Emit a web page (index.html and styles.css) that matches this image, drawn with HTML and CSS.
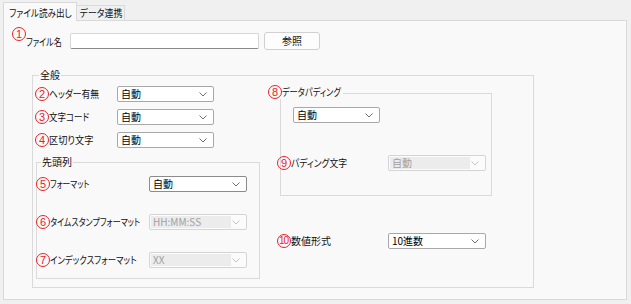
FILE: index.html
```html
<!DOCTYPE html>
<html lang="ja">
<head>
    <meta charset="UTF-8">
    <title>ファイル読み出し</title>
    <link rel="stylesheet" href="styles.css">
</head>
<body>

    <!-- タブ -->
    <div class="tabs">
        <div class="tab active"><span class="t sx-86">ファイル読み出し</span></div>
        <div class="tab"><span class="t sx-89">データ連携</span></div>
    </div>

    <div class="panel">

        <div class="file-row">
            <span class="num">1</span>
            <span class="file-label"><span class="t sx-80">ファイル名</span></span>
            <input class="file-input" type="text">
            <button class="browse">参照</button>
        </div>

        <div class="group general">
            <div class="group-title">全般</div>
            <div class="general-body">

                <div class="col-left">
                    <div class="rows">
                        <div class="row">
                            <span class="num">2</span>
                            <span class="label w-68"><span class="t sx-88">ヘッダー有無</span></span>
                            <div class="select w-97"><span class="value">自動</span><svg width="8" height="5" viewBox="0 0 8 5"><path d="M0.5 0.5 L4 4 L7.5 0.5" fill="none" stroke="#707070"/></svg></div>
                        </div>
                        <div class="row">
                            <span class="num">3</span>
                            <span class="label w-68"><span class="t sx-85">文字コード</span></span>
                            <div class="select w-97"><span class="value">自動</span><svg width="8" height="5" viewBox="0 0 8 5"><path d="M0.5 0.5 L4 4 L7.5 0.5" fill="none" stroke="#707070"/></svg></div>
                        </div>
                        <div class="row">
                            <span class="num">4</span>
                            <span class="label w-68"><span class="t sx-92">区切り文字</span></span>
                            <div class="select w-97"><span class="value">自動</span><svg width="8" height="5" viewBox="0 0 8 5"><path d="M0.5 0.5 L4 4 L7.5 0.5" fill="none" stroke="#707070"/></svg></div>
                        </div>
                    </div>

                    <div class="group head">
                        <div class="group-title">先頭列</div>
                        <div class="rows rows-wide">
                            <div class="row shift-1">
                                <span class="num">5</span>
                                <span class="label w-99"><span class="t sx-78">フォーマット</span></span>
                                <div class="select w-98 strong"><span class="value">自動</span><svg width="8" height="5" viewBox="0 0 8 5"><path d="M0.5 0.5 L4 4 L7.5 0.5" fill="none" stroke="#707070"/></svg></div>
                            </div>
                            <div class="row shift-1">
                                <span class="num">6</span>
                                <span class="label w-99"><span class="t sx-80">タイムスタンプフォーマット</span></span>
                                <div class="select w-98 disabled"><span class="value">HH:MM:SS</span><svg width="8" height="5" viewBox="0 0 8 5"><path d="M0.5 0.5 L4 4 L7.5 0.5" fill="none" stroke="#c4c4c4"/></svg></div>
                            </div>
                            <div class="row shift-1">
                                <span class="num">7</span>
                                <span class="label w-99"><span class="t sx-84">インデックスフォーマット</span></span>
                                <div class="select w-98 disabled"><span class="value">XX</span><svg width="8" height="5" viewBox="0 0 8 5"><path d="M0.5 0.5 L4 4 L7.5 0.5" fill="none" stroke="#c4c4c4"/></svg></div>
                            </div>
                        </div>
                    </div>
                </div>

                <div class="col-right">
                    <div class="group padding">
                        <div class="group-title pad-title"><span class="num">8</span><span class="t sx-82">データパディング</span></div>
                        <div class="select w-87 pad-select"><span class="value">自動</span><svg width="8" height="5" viewBox="0 0 8 5"><path d="M0.5 0.5 L4 4 L7.5 0.5" fill="none" stroke="#707070"/></svg></div>
                        <div class="row pad-row">
                            <span class="num">9</span>
                            <span class="label w-97"><span class="t sx-88">パディング文字</span></span>
                            <div class="select w-98 disabled"><span class="value">自動</span><svg width="8" height="5" viewBox="0 0 8 5"><path d="M0.5 0.5 L4 4 L7.5 0.5" fill="none" stroke="#c4c4c4"/></svg></div>
                        </div>
                    </div>

                    <div class="row number-row">
                        <span class="num num-10">10</span>
                        <span class="label w-97">数値形式</span>
                        <div class="select w-98"><span class="value">10進数</span><svg width="8" height="5" viewBox="0 0 8 5"><path d="M0.5 0.5 L4 4 L7.5 0.5" fill="none" stroke="#707070"/></svg></div>
                    </div>
                </div>

            </div>
        </div>

    </div>

    <div class="next-title">出力形式</div>

</body>
</html>
```

FILE: styles.css
```css
body {
    margin: 0;
    width: 631px;
    height: 304px;
    overflow: hidden;
    background-color: #f0f0f0;
    font-family: "Noto Sans CJK JP", sans-serif;
    font-feature-settings: "palt";
    font-size: 10px;
    color: #111111;
}

.t {
    display: inline-block;
    white-space: nowrap;
    transform-origin: 0 50%;
}

.sx-78 { transform: scaleX(0.78); }
.sx-80 { transform: scaleX(0.80); }
.sx-82 { transform: scaleX(0.82); }
.sx-84 { transform: scaleX(0.84); }
.sx-85 { transform: scaleX(0.85); }
.sx-86 { transform: scaleX(0.86); }
.sx-88 { transform: scaleX(0.88); }
.sx-89 { transform: scaleX(0.89); }
.sx-92 { transform: scaleX(0.92); }

/* tabs */
.tabs {
    display: flex;
    align-items: flex-end;
    height: 18px;
    padding-top: 2px;
    margin-left: 3px;
}

.tab {
    box-sizing: border-box;
    width: 48px;
    height: 15px;
    line-height: 14px;
    text-align: center;
    white-space: nowrap;
    border: 1px solid #d9d9d9;
    border-bottom: none;
    border-left: none;
    background-color: #f0f0f0;
}

.tab .t {
    transform-origin: 50% 50%;
}

.tab.active {
    position: relative;
    z-index: 1;
    width: 74px;
    height: 19px;
    margin-bottom: -1px;
    line-height: 20px;
    border-left: 1px solid #d9d9d9;
    background-color: #f9f9f9;
}

.panel {
    box-sizing: border-box;
    width: 624px;
    height: 280px;
    margin-left: 3px;
    border: 1px solid #d9d9d9;
    background-color: #f9f9f9;
}

/* circled numbers */
.num {
    box-sizing: border-box;
    flex: none;
    display: inline-block;
    width: 14px;
    height: 14px;
    border: 1px solid #e8202a;
    border-radius: 50%;
    color: #e8202a;
    font-family: "Liberation Sans", sans-serif;
    font-size: 11px;
    line-height: 12px;
    text-align: center;
}

.num-10 {
    font-size: 10px;
    letter-spacing: -1px;
    text-indent: -1px;
}

/* file row */
.file-row {
    display: flex;
    align-items: flex-start;
    height: 23px;
    margin: 6px 0 0 8px;
}

.file-label {
    width: 44px;
    margin-top: 7px;
    line-height: 16px;
    white-space: nowrap;
}

.file-input {
    box-sizing: border-box;
    width: 189px;
    height: 16px;
    margin: 6px 0 0 0;
    padding: 0;
    border: 1px solid #d6d6d6;
    border-bottom-color: #8a8a8a;
    border-radius: 2px;
    background-color: #ffffff;
}

.browse {
    box-sizing: border-box;
    width: 56px;
    height: 18px;
    margin: 5px 0 0 5px;
    padding: 0;
    border: 1px solid #d0d0d0;
    border-radius: 3px;
    background-color: #fdfdfd;
    font-family: "Noto Sans CJK JP", sans-serif;
    font-size: 10px;
    line-height: 14px;
    color: #111111;
}

/* group boxes */
.group {
    box-sizing: border-box;
    border: 1px solid #dadada;
}

.group-title {
    width: fit-content;
    height: 14px;
    margin-top: -8px;
    margin-left: 6px;
    padding: 0 1px;
    line-height: 14px;
    background-color: #f9f9f9;
}

.general {
    width: 502px;
    height: 213px;
    margin: 25px 0 0 28px;
}

.general-body {
    display: flex;
}

.col-left {
    width: 227px;
}

.rows {
    display: flex;
    flex-direction: column;
    gap: 7px;
    padding-top: 4px;
}

.rows-wide {
    gap: 22px;
    padding-top: 7px;
}

.row {
    display: flex;
    align-items: center;
    height: 16px;
    padding-left: 2px;
}

.row.shift-1 {
    padding-left: 0;
    margin-left: -1px;
}

.label {
    flex: none;
    line-height: 16px;
    white-space: nowrap;
}

.w-68 { width: 68px; }
.w-97 { width: 97px; }
.w-99 { width: 99px; }

.head {
    width: 224px;
    height: 117px;
    margin: 14px 0 0 3px;
}

.head .group-title {
    margin-left: 4px;
}

.padding {
    width: 212px;
    height: 103px;
    margin: 11px 0 0 20px;
}

.pad-title {
    display: flex;
    align-items: center;
    width: 75px;
    margin-top: -9px;
    margin-left: -13px;
    padding: 0;
}

.pad-title .t {
    flex: none;
}

.pad-select {
    margin: 8px 0 0 12px;
}

.pad-row {
    margin: 32px 0 0 -4px;
    padding-left: 0;
}

.number-row {
    margin: 37px 0 0 17px;
    padding-left: 0;
}

/* dropdowns */
.select {
    box-sizing: border-box;
    flex: none;
    display: flex;
    align-items: center;
    justify-content: space-between;
    height: 16px;
    padding: 0 6px 0 3px;
    border: 1px solid #a8a8a8;
    border-radius: 2px;
    background-color: #ffffff;
    line-height: 14px;
    color: #000000;
}

.select.strong {
    border-color: #8c8c8c;
}

.w-87 { width: 87px; }
.w-98 { width: 98px; }

.select.disabled {
    padding-left: 1px;
    border-color: #d4d4d4;
    background-color: #fbfbfb;
    color: #a0a0a0;
}

.select.disabled .value {
    flex: 0 0 78px;
    height: 12px;
    padding-left: 2px;
    line-height: 12px;
    background-color: #ececec;
}

.next-title {
    margin: 3px 0 0 40px;
    line-height: 14px;
}
```
